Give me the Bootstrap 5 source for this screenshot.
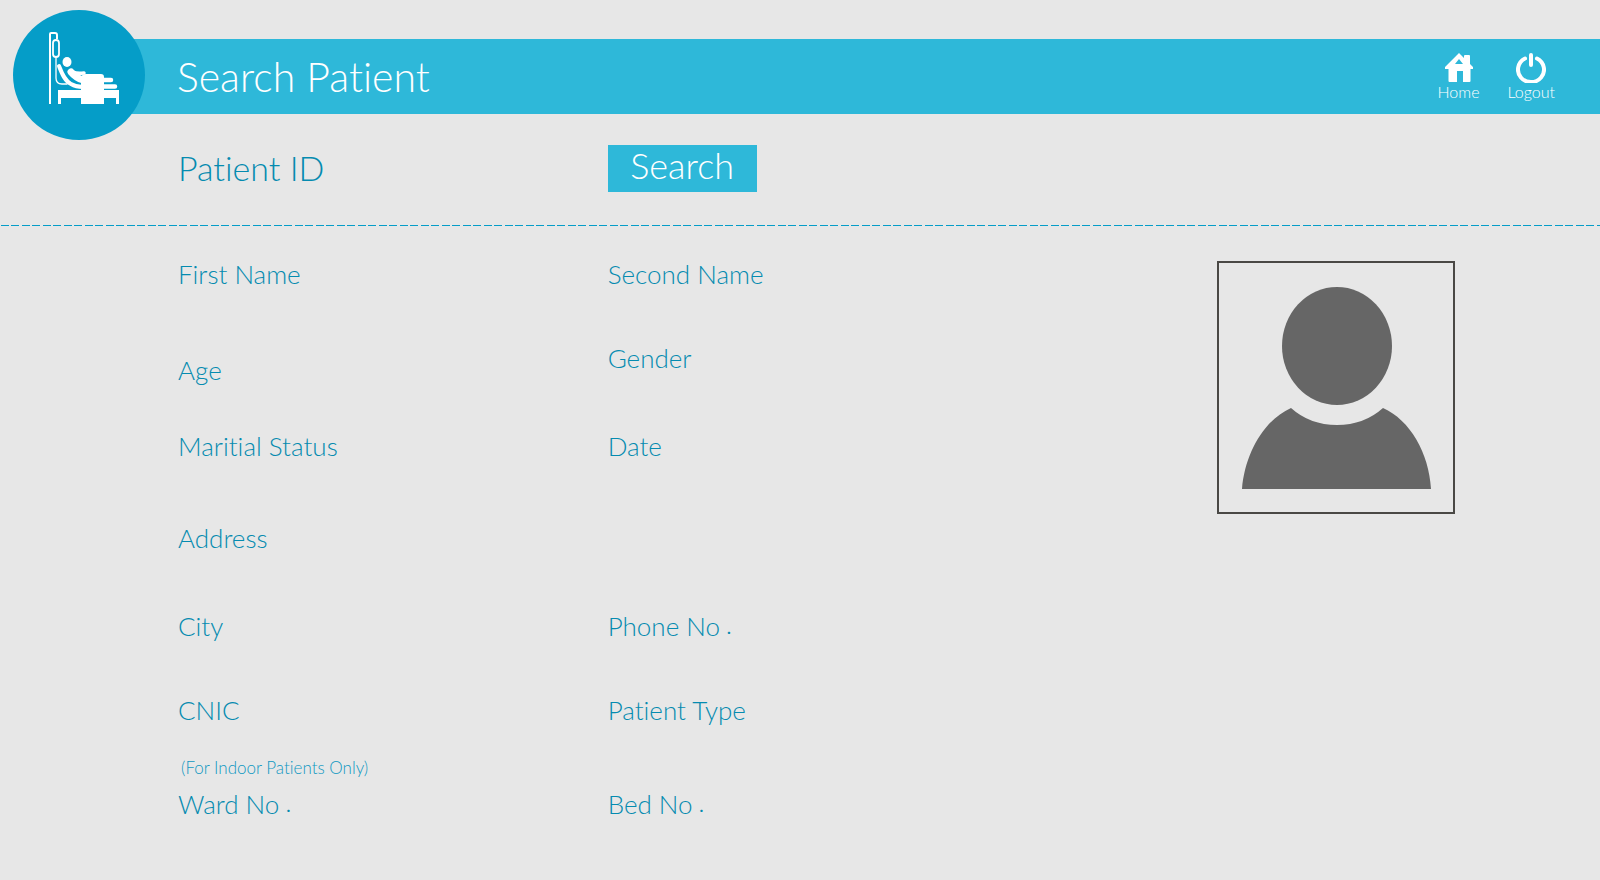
<!DOCTYPE html>
<html lang="en">
<head>
<meta charset="utf-8">
<meta name="viewport" content="width=device-width, initial-scale=1">
<title>Search Patient</title>
<link href="https://cdn.jsdelivr.net/npm/bootstrap@5.3.0/dist/css/bootstrap.min.css" rel="stylesheet">
<style>
  body { background: #e7e7e7; color: #058bb0; font-family: Lato, "Open Sans", sans-serif; font-weight: 300; font-variant-ligatures: none; }
  .topbar { background: #2eb8d9; height: 75px; margin: 39px 0 0 79px; padding: 0 45px 0 98px; }
  .emblem { position: absolute; left: -66px; top: -29px; width: 132px; height: 130px; }
  .topbar h1 { font-size: 41px; font-weight: 300; line-height: 48px; }
  .tools { gap: 28px; }
  .tool { font-size: 16px; line-height: 18px; color: #fff; text-decoration: none; }
  .tool svg { height: 31px; }
  .content-area { padding: 0 145px 0 178px; }
  .content-area .row { --bs-gutter-x: 12px; }
  .search-row { height: 111px; padding-top: 31px; }
  .search-row label { font-size: 34px; line-height: 46px; white-space: nowrap; }
  .search-row button { background: #2eb8d9; width: 149px; height: 47px; font-size: 36px; line-height: 40px; padding: 0 0 7px; font-weight: 300; }
  .rule { height: 1px; background: repeating-linear-gradient(90deg, transparent 0 1px, #059dc8 1px 9px, transparent 9px 11px, #059dc8 11px 19px, transparent 19px 21px); }
  .plain { background: transparent; border: 0; color: inherit; min-width: 0; outline-offset: -2px; }
  .fields { display: grid; padding-top: 32px; font-size: 26px; line-height: 32px; }
  .fields label { white-space: nowrap; }
  .fields .plain { height: 32px; }
  .fields-left { grid-template-rows: 96px 76px 92px 88px 84px 58px 36px; }
  .fields-right { grid-template-rows: 84px 88px 180px 84px 94px; }
  .note { font-size: 17px; color: #0f98c2; padding-left: 3px; }
  .dot { font-size: 16px; font-weight: 700; vertical-align: 2px; line-height: 1; }
  .photo { width: 238px; height: 253px; margin-top: 35px; border: 2px solid #4a4845; }
</style>
</head>
<body>
<header class="topbar position-relative d-flex align-items-center justify-content-between text-white">
  <svg class="emblem" viewBox="0 0 132 130" aria-hidden="true">
    <ellipse cx="66" cy="65" rx="66" ry="65" fill="#059dc8"/>
    <g fill="none" stroke="#fff" stroke-linecap="round" stroke-linejoin="round">
      <path d="M37 94V24q0-1 1-1h4q2 0 2 2v4" stroke-width="2" stroke-linecap="butt"/>
      <rect x="40" y="30" width="6" height="17" rx="3" stroke-width="1.800"/>
      <path d="M43 48v20q0 6 6 6h5" stroke-width="1.300"/>
      <path d="M46 56c3 8 6 15 12 18q5 3 12 3" stroke-width="4"/>
      <path d="M58 62q5 6 12 8" stroke-width="7"/>
      <path d="M60 62q4 2 11 1" stroke-width="3.500"/>
      <path d="M88 70h10M88 76.500h14" stroke-width="4.500"/>
    </g>
    <g fill="#fff">
      <ellipse cx="54" cy="52" rx="4.500" ry="5"/>
      <path d="M45 80h61v14h-3v-6H48v6h-3z"/>
      <path d="M68 69q0-5 5-5h15q3 0 3 3v27H68z"/>
    </g>
  </svg>
  <h1 class="m-0">Search Patient</h1>
  <nav class="tools d-flex align-items-center" aria-label="Main">
    <a class="tool d-flex flex-column align-items-center" href="#">
      <svg width="28" viewBox="0 0 28 31" aria-hidden="true"><path fill="#fff" fill-rule="evenodd" d="M14 1l5 5V4q0-1 1-1h4q1 0 1 1v8l3 3v2h-2.500v12q0 1-1 1H18V19h-6v11H4.500q-1 0-1-1V17H0v-2zM14 7l-4 5h8z"/></svg>
      Home
    </a>
    <a class="tool d-flex flex-column align-items-center" href="#">
      <svg width="30" viewBox="0 0 30 31" aria-hidden="true"><path d="M9 6.500a13 12.500 0 1 0 12 0M15 3v10" fill="none" stroke="#fff" stroke-width="4" stroke-linecap="round"/></svg>
      Logout
    </a>
  </nav>
</header>
<main>
  <form class="content-area">
    <div class="row search-row">
      <div class="col-4 d-flex align-items-start gap-3">
        <label for="pid">Patient ID</label>
        <input class="plain flex-grow-1" id="pid" type="text">
      </div>
      <div class="col-4"><button type="button" class="btn rounded-0 border-0 text-white d-block">Search</button></div>
    </div>
  </form>
  <div class="rule"></div>
  <div class="content-area">
    <div class="row">
      <div class="col-4 fields fields-left">
        <div class="d-flex gap-3"><label for="first">First Name</label><input class="plain flex-grow-1" id="first" readonly></div>
        <div class="d-flex gap-3"><label for="age">Age</label><input class="plain flex-grow-1" id="age" readonly></div>
        <div class="d-flex gap-3"><label for="marital">Maritial Status</label><input class="plain flex-grow-1" id="marital" readonly></div>
        <div class="d-flex gap-3"><label for="address">Address</label><input class="plain flex-grow-1" id="address" readonly></div>
        <div class="d-flex gap-3"><label for="city">City</label><input class="plain flex-grow-1" id="city" readonly></div>
        <div class="d-flex gap-3"><label for="cnic">CNIC</label><input class="plain flex-grow-1" id="cnic" readonly></div>
        <div class="note">(For Indoor Patients Only)</div>
        <div class="d-flex gap-3"><label for="ward">Ward No <span class="dot">.</span></label><input class="plain flex-grow-1" id="ward" readonly></div>
      </div>
      <div class="col-4 fields fields-right">
        <div class="d-flex gap-3"><label for="second">Second Name</label><input class="plain flex-grow-1" id="second" readonly></div>
        <div class="d-flex gap-3"><label for="gender">Gender</label><input class="plain flex-grow-1" id="gender" readonly></div>
        <div class="d-flex gap-3"><label for="date">Date</label><input class="plain flex-grow-1" id="date" readonly></div>
        <div class="d-flex gap-3"><label for="phone">Phone No <span class="dot">.</span></label><input class="plain flex-grow-1" id="phone" readonly></div>
        <div class="d-flex gap-3"><label for="type">Patient Type</label><input class="plain flex-grow-1" id="type" readonly></div>
        <div class="d-flex gap-3"><label for="bed">Bed No <span class="dot">.</span></label><input class="plain flex-grow-1" id="bed" readonly></div>
      </div>
      <div class="col-4 d-flex justify-content-end align-items-start">
        <div class="photo">
          <svg class="d-block" width="234" height="249" viewBox="0 0 234 249" role="img" aria-label="Patient photo" fill="#666">
            <ellipse cx="118" cy="83" rx="55" ry="59"/>
            <path d="M23 226C26 190 45 157 72 145q19 17 46 17t46-17C191 157 210 190 212 226z"/>
          </svg>
        </div>
      </div>
    </div>
  </div>
</main>
<script src="https://cdn.jsdelivr.net/npm/bootstrap@5.3.0/dist/js/bootstrap.bundle.min.js"></script>
</body>
</html>
